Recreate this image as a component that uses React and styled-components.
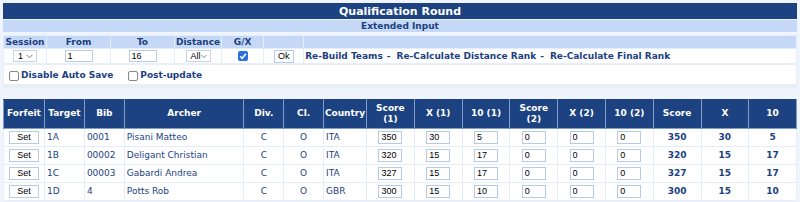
import React from 'react'
import styled, { createGlobalStyle } from 'styled-components'

const GlobalStyle = createGlobalStyle`
  body {
    margin: 0;
    background: #f0f5fd;
    font-family: 'DejaVu Sans', Verdana, sans-serif;
    color: #1c3f7f;
  }
`

const Page = styled.div`
  padding: 3px;
`

const Table = styled.table`
  width: 100%;
  border-collapse: collapse;
  margin-bottom: ${(p) => p.gap || 0}px;
`

const TitleCell = styled.th`
  background: #1c4282;
  color: #fff;
  font-size: 11px;
  font-weight: bold;
  height: 16px;
  padding: 0;
  text-align: center;
`

const SubTitleCell = styled.th`
  background: #c5d9f7;
  color: #1c3f7f;
  font-size: 9px;
  font-weight: bold;
  height: 12px;
  padding: 0;
  text-align: center;
  border-top: 1px solid #f0f5fd;
`

const LightHead = styled.th`
  background: #c5d9f7;
  color: #1c3f7f;
  font-size: 9px;
  font-weight: bold;
  height: 12px;
  padding: 0 1px;
  border: 1px solid #e4edfa;
  width: ${(p) => (p.w ? `${p.w}px` : 'auto')};
  white-space: nowrap;
`

const LightCell = styled.td`
  background: #fff;
  border: 1px solid #e4edfa;
  height: 14px;
  padding: 0 ${(p) => (p.align === 'left' ? 1 : 2)}px;
  font-size: 9px;
  text-align: ${(p) => p.align || 'center'};
  white-space: nowrap;
`

const OptionsCell = styled.td`
  background: #fff;
  height: 12px;
  padding: 5px 5px 0;
  vertical-align: top;
  font-size: 9px;
  line-height: 11px;
  font-weight: bold;
  border: 1px solid #e4edfa;
  border-top: 2px solid #e8eff9;
  border-bottom: 4px solid #e8eff9;
`

const Link = styled.span`
  font-weight: bold;
  color: #1c3f7f;
  margin-right: ${(p) => (p.last ? 0 : 4)}px;
`

const Sep = styled.span`
  font-weight: bold;
  margin-right: 6px;
`

const Select = styled.span`
  display: inline-flex;
  align-items: center;
  justify-content: space-between;
  box-sizing: border-box;
  width: ${(p) => p.w}px;
  height: 12px;
  border: 1px solid #c6d4e8;
  background: #fff;
  font-size: 9px;
  color: #000;
  padding: 0 3px 0 4px;
  vertical-align: middle;
  font-family: 'Liberation Sans', Arial, sans-serif;
`

const Chevron = () => (
  <svg width="7" height="5" viewBox="0 0 7 5">
    <path d="M0.5 0.8 L3.5 3.8 L6.5 0.8" fill="none" stroke="#666" strokeWidth="0.9" />
  </svg>
)

const TextInput = styled.input`
  box-sizing: border-box;
  width: ${(p) => p.w || 24}px;
  height: ${(p) => p.h || 13}px;
  border: 1px solid #b8cbe6;
  background: #fff;
  font-size: 9px;
  font-family: 'Liberation Sans', Arial, sans-serif;
  padding: 0 2px;
  color: #000;
  vertical-align: middle;
  outline: none;
`

const Button = styled.button`
  box-sizing: border-box;
  width: ${(p) => p.w}px;
  height: ${(p) => p.h}px;
  border: 1px solid #b8cbe6;
  background: #fff;
  font-size: 9px;
  font-family: 'Liberation Sans', Arial, sans-serif;
  color: #000;
  padding: 0;
  vertical-align: middle;
`

const CheckLabel = styled.label`
  display: inline-flex;
  align-items: center;
  gap: 2px;
  margin-right: 15px;
  font-weight: bold;
`

const Box = styled.span`
  display: inline-block;
  box-sizing: border-box;
  width: 10px;
  height: 10px;
  border: 1px solid #888;
  border-radius: 2px;
  background: #fff;
`

const Checked = () => (
  <svg width="10" height="10" viewBox="0 0 10 10" style={{ verticalAlign: 'middle' }}>
    <rect x="0" y="0" width="10" height="10" rx="2" fill="#2a6fe0" />
    <path d="M2.2 5.3 L4.2 7.3 L7.9 2.7" fill="none" stroke="#fff" strokeWidth="1.5" />
  </svg>
)

const HeadCell = styled.th`
  background: #1c4282;
  color: #fff;
  font-size: 9px;
  font-weight: bold;
  height: 28px;
  padding: 0;
  line-height: 11px;
  border: 1px solid #7f9ccc;
  border-top-color: #1c4282;
  width: ${(p) => p.w}px;
  text-align: center;
`

const Cell = styled.td`
  background: #fff;
  border: 1px solid #e4edfa;
  height: 17px;
  padding: 0 0 0 ${(p) => (p.align === 'left' ? 2 : 0)}px;
  font-size: 9px;
  font-weight: ${(p) => (p.bold ? 'bold' : 'normal')};
  text-align: ${(p) => p.align || 'center'};
  white-space: nowrap;
`

const rows = [
  { target: '1A', bib: '0001', archer: 'Pisani Matteo', country: 'ITA', s1: 350, x1: 30, t1: 5 },
  { target: '1B', bib: '00002', archer: 'Deligant Christian', country: 'ITA', s1: 320, x1: 15, t1: 17 },
  { target: '1C', bib: '00003', archer: 'Gabardi Andrea', country: 'ITA', s1: 327, x1: 15, t1: 17 },
  { target: '1D', bib: '4', archer: 'Potts Rob', country: 'GBR', s1: 300, x1: 15, t1: 10 },
]

const columns = [
  ['Forfeit', 40], ['Target', 39], ['Bib', 39], ['Archer', 119], ['Div.', 39], ['Cl.', 39],
  ['Country', 42], [<>Score<br />(1)</>, 47], ['X (1)', 47], ['10 (1)', 47], [<>Score<br />(2)</>, 47],
  ['X (2)', 47], ['10 (2)', 47], ['Score', 47], ['X', 47], ['10', 47],
]

const App = () => (
  <Page>
    <GlobalStyle />
    <Table gap={3}>
      <tbody>
        <tr><TitleCell>Qualification Round</TitleCell></tr>
        <tr><SubTitleCell>Extended Input</SubTitleCell></tr>
      </tbody>
    </Table>

    <Table gap={11}>
      <tbody>
        <tr>
          <LightHead w={40}>Session</LightHead>
          <LightHead w={61}>From</LightHead>
          <LightHead w={61}>To</LightHead>
          <LightHead w={42}>Distance</LightHead>
          <LightHead w={39}>G/X</LightHead>
          <LightHead w={37} />
          <LightHead />
        </tr>
        <tr>
          <LightCell><Select w={24}>1<Chevron /></Select></LightCell>
          <LightCell><TextInput w={28} h={12} defaultValue="1" /></LightCell>
          <LightCell><TextInput w={28} h={12} defaultValue="16" /></LightCell>
          <LightCell><Select w={25}>All<Chevron /></Select></LightCell>
          <LightCell><Checked /></LightCell>
          <LightCell><Button w={20} h={13}>Ok</Button></LightCell>
          <LightCell align="left">
            <Link>Re-Build Teams</Link><Sep>-</Sep>
            <Link>Re-Calculate Distance Rank</Link><Sep>-</Sep>
            <Link last>Re-Calculate Final Rank</Link>
          </LightCell>
        </tr>
        <tr>
          <OptionsCell colSpan={7}>
            <CheckLabel><Box />Disable Auto Save</CheckLabel>
            <CheckLabel><Box />Post-update</CheckLabel>
          </OptionsCell>
        </tr>
      </tbody>
    </Table>

    <Table>
      <thead>
        <tr>
          {columns.map(([label, w], i) => (
            <HeadCell key={i} w={w}>{label}</HeadCell>
          ))}
        </tr>
      </thead>
      <tbody>
        {rows.map((r) => (
          <tr key={r.target}>
            <Cell><Button w={30} h={13}>Set</Button></Cell>
            <Cell align="left">{r.target}</Cell>
            <Cell align="left">{r.bib}</Cell>
            <Cell align="left">{r.archer}</Cell>
            <Cell>C</Cell>
            <Cell>O</Cell>
            <Cell align="left">{r.country}</Cell>
            <Cell><TextInput defaultValue={r.s1} /></Cell>
            <Cell><TextInput defaultValue={r.x1} /></Cell>
            <Cell><TextInput defaultValue={r.t1} /></Cell>
            <Cell><TextInput defaultValue="0" /></Cell>
            <Cell><TextInput defaultValue="0" /></Cell>
            <Cell><TextInput defaultValue="0" /></Cell>
            <Cell bold>{r.s1}</Cell>
            <Cell bold>{r.x1}</Cell>
            <Cell bold>{r.t1}</Cell>
          </tr>
        ))}
      </tbody>
    </Table>
  </Page>
)

export default App
